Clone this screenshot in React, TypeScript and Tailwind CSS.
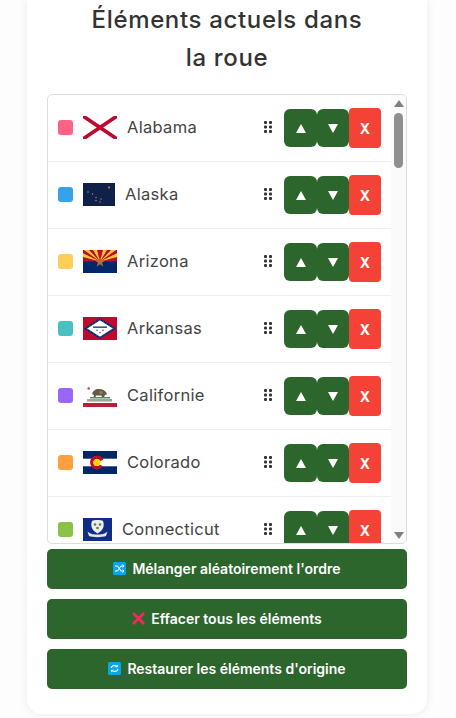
import React from 'react';

const FlagAlabama = () => (
  <svg width="34" height="23" viewBox="0 0 34 23">
    <rect width="34" height="23" fill="#fff" />
    <path d="M0 0L34 23M34 0L0 23" stroke="#c0082f" strokeWidth="3.6" />
  </svg>
);

const FlagAlaska = () => (
  <svg width="32" height="23" viewBox="0 0 32 23">
    <rect width="32" height="23" fill="#0f204b" />
    <g fill="#b89a4e">
      <circle cx="26" cy="4.5" r="1" />
      <circle cx="5" cy="9" r="0.8" />
      <circle cx="9.5" cy="11" r="0.7" />
      <circle cx="13" cy="14.5" r="0.7" />
      <circle cx="13" cy="17.5" r="0.7" />
      <circle cx="17" cy="19" r="0.7" />
      <circle cx="18" cy="16" r="0.7" />
    </g>
  </svg>
);

const FlagArizona = () => (
  <svg width="34" height="23" viewBox="0 0 34 23">
    <rect width="34" height="23" fill="#002868" />
    <rect width="34" height="11.5" fill="#bf0a30" />
    <path d="M17 11.5L1 0H6ZM17 11.5L10 0H14ZM17 11.5L20 0H24ZM17 11.5L28 0H33ZM17 11.5L0 3.2V7ZM17 11.5L34 3.2V7Z" fill="#fec72f" />
    <path d="M17 6.5L18.3 10.2L22.2 10.3L19.1 12.7L20.2 16.4L17 14.2L13.8 16.4L14.9 12.7L11.8 10.3L15.7 10.2Z" fill="#c1683c" />
  </svg>
);

const FlagArkansas = () => (
  <svg width="34" height="23" viewBox="0 0 34 23">
    <rect width="34" height="23" fill="#bf0a30" />
    <path d="M17 2.2L31.5 11.5L17 20.8L2.5 11.5Z" fill="#fff" stroke="#002868" strokeWidth="1.8" />
    <path d="M17 2.2L31.5 11.5L17 20.8L2.5 11.5Z" fill="none" stroke="#9fb0d0" strokeWidth="0.5" strokeDasharray="1 2.5" />
    <rect x="10" y="9.4" width="14" height="1.6" fill="#3a5590" />
    <g fill="#5a6e9c">
      <circle cx="14" cy="13.4" r="0.8" />
      <circle cx="20" cy="13.4" r="0.8" />
      <circle cx="17" cy="15.6" r="0.8" />
    </g>
  </svg>
);

const FlagCalifornia = () => (
  <svg width="34" height="23" viewBox="0 0 34 23">
    <rect width="34" height="23" fill="#fff" />
    <rect y="19" width="34" height="4" fill="#b8203a" />
    <circle cx="5.7" cy="4.5" r="1.3" fill="#e2384d" />
    <path d="M9 10C10 7 12 5 16 5C19 5 21 6 23 8L24 10.5L22 11L21 13H19L18.5 11.5H13L12.5 13H10.5L11 11Z" fill="#5f5a50" />
    <path d="M16 7.5L19 7L20 9.5L17 10Z" fill="#b5763a" />
    <rect x="7" y="13" width="20" height="1.5" fill="#5d8f55" />
    <rect x="4" y="15" width="25" height="2.6" fill="#a3a69c" />
  </svg>
);

const FlagColorado = () => (
  <svg width="34" height="23" viewBox="0 0 34 23">
    <rect width="34" height="23" fill="#002868" />
    <rect y="7.7" width="34" height="7.6" fill="#fff" />
    <circle cx="14" cy="11.5" r="5.2" fill="none" stroke="#bf0a30" strokeWidth="3.4" strokeDasharray="26.7 6" strokeDashoffset="-3" />
    <circle cx="14" cy="11.5" r="3.6" fill="#ffd700" />
  </svg>
);

const FlagConnecticut = () => (
  <svg width="29" height="23" viewBox="0 0 29 23">
    <rect width="29" height="23" fill="#0f2d86" />
    <path d="M9 3C11 1.8 18 1.8 20 3C21.5 7 21 12 14.5 15.5C8 12 7.5 7 9 3Z" fill="#eceee8" />
    <g fill="#5b7a5e">
      <circle cx="12" cy="6.5" r="1.3" />
      <circle cx="17" cy="6.5" r="1.3" />
      <circle cx="14.5" cy="10" r="1.3" />
    </g>
    <path d="M4.5 13.5C8 16.5 11 16.5 14.5 16.5C18 16.5 21 16.5 24.5 13.5L23 18C20 19.5 9 19.5 6 18Z" fill="#e3e6de" />
  </svg>
);

const Grip = () => (
  <svg className="mb-[2px]" width="8" height="12" viewBox="0 0 8 12" fill="#333">
    <rect x="0" y="0" width="3" height="3" rx="1" />
    <rect x="5" y="0" width="3" height="3" rx="1" />
    <rect x="0" y="4.5" width="3" height="3" rx="1" />
    <rect x="5" y="4.5" width="3" height="3" rx="1" />
    <rect x="0" y="9" width="3" height="3" rx="1" />
    <rect x="5" y="9" width="3" height="3" rx="1" />
  </svg>
);

const items = [
  { name: 'Alabama', color: 'bg-[#ff6384]', flag: <FlagAlabama /> },
  { name: 'Alaska', color: 'bg-[#36a2eb]', flag: <FlagAlaska /> },
  { name: 'Arizona', color: 'bg-[#ffce56]', flag: <FlagArizona /> },
  { name: 'Arkansas', color: 'bg-[#4bc0c0]', flag: <FlagArkansas /> },
  { name: 'Californie', color: 'bg-[#9966ff]', flag: <FlagCalifornia /> },
  { name: 'Colorado', color: 'bg-[#ff9f40]', flag: <FlagColorado /> },
  { name: 'Connecticut', color: 'bg-[#8bc34a]', flag: <FlagConnecticut /> },
];

const Row = ({ name, color, flag }: { name: string; color: string; flag: React.ReactNode }) => (
  <div className="flex h-[67px] shrink-0 items-center border-b border-[#eeeeee] pl-[10px] pr-[10px]">
    <div className={`mb-[1px] h-[15px] w-[15px] shrink-0 rounded-[3px] ${color}`}></div>
    <div className="mb-[1px] ml-[10px] flex shrink-0">{flag}</div>
    <span className="ml-[10px] flex-1 pb-[2px] text-[16.5px] text-[#444444] tracking-[0.3px]">{name}</span>
    <Grip />
    <div className="ml-[12px] flex items-center">
      <button className="flex h-[38px] w-[33px] items-center justify-center rounded-[6px] bg-[#2c662d]">
        <svg width="10" height="9" viewBox="0 0 10 9" fill="#fff"><path d="M5 0L10 9H0Z" /></svg>
      </button>
      <button className="flex h-[38px] w-[32px] items-center justify-center rounded-[6px] bg-[#2c662d]">
        <svg width="10" height="9" viewBox="0 0 10 9" fill="#fff"><path d="M0 0H10L5 9Z" /></svg>
      </button>
      <button className="h-[40px] w-[32px] rounded-[4px] bg-[#f44336] text-[14px] font-bold text-white">X</button>
    </div>
  </div>
);

const ActionButton = ({ icon, label }: { icon: React.ReactNode; label: string }) => (
  <button className="flex h-[40px] w-full items-center justify-center gap-[6px] rounded-[5px] bg-[#2c662d] pb-[1px] text-[14px] font-semibold text-white">
    {icon}
    <span>{label}</span>
  </button>
);

export default function App() {
  return (
    <div className="h-[718px] w-[456px] overflow-hidden bg-[#fdfdfd] font-['Inter',sans-serif]">
      <div className="mx-[27px] flex h-[714px] w-[400px] flex-col rounded-b-[15px] bg-white px-[20px] pt-[1px] shadow-[0_0_10px_rgba(0,0,0,0.08)]">
        <h2 className="mb-[17px] text-center text-[24px] font-medium leading-[38px] text-[#333333] tracking-[0.65px]">
          Éléments actuels dans
          <br />
          la roue
        </h2>

        <div className="flex h-[450px] shrink-0 overflow-hidden rounded-[5px] border border-[#dddddd]">
          <div className="flex min-w-0 flex-1 flex-col">
            {items.map((item) => (
              <Row key={item.name} {...item} />
            ))}
          </div>
          {/* scrollbar */}
          <div className="flex w-[15px] shrink-0 flex-col items-center bg-[#fafafa] pt-[5px] pb-[4px]">
            <svg width="10" height="7" viewBox="0 0 10 7" fill="#808080"><path d="M5 0L10 7H0Z" /></svg>
            <div className="mt-[6px] h-[55px] w-[9px] rounded-full bg-[#8f8f8f]"></div>
            <svg className="mt-auto" width="10" height="7" viewBox="0 0 10 7" fill="#808080"><path d="M0 0H10L5 7Z" /></svg>
          </div>
        </div>

        <div className="mt-[5px] flex flex-col gap-[10px]">
          <ActionButton
            label="Mélanger aléatoirement l'ordre"
            icon={
              <svg width="13" height="13" viewBox="0 0 13 13">
                <rect width="13" height="13" rx="1.5" fill="#03a9e8" />
                <path d="M2 4H4.5L8 9H11M2 9H4.5L8 4H11M9.5 2.5L11 4L9.5 5.5M9.5 7.5L11 9L9.5 10.5" fill="none" stroke="#fff" strokeWidth="1" />
              </svg>
            }
          />
          <ActionButton
            label="Effacer tous les éléments"
            icon={
              <svg width="13" height="13" viewBox="0 0 13 13">
                <path d="M1 1L12 12M12 1L1 12" stroke="#f5285c" strokeWidth="2.7" />
              </svg>
            }
          />
          <ActionButton
            label="Restaurer les éléments d'origine"
            icon={
              <svg width="13" height="13" viewBox="0 0 13 13">
                <rect width="13" height="13" rx="1.5" fill="#03a9e8" />
                <path d="M3 6C3.4 4 6.5 2.5 9 4.5M10 7C9.6 9 6.5 10.5 4 8.5" fill="none" stroke="#fff" strokeWidth="1.2" />
                <path d="M9.8 2.6V5.2H7.2ZM3.2 10.4V7.8H5.8Z" fill="#fff" />
              </svg>
            }
          />
        </div>
      </div>
    </div>
  );
}
